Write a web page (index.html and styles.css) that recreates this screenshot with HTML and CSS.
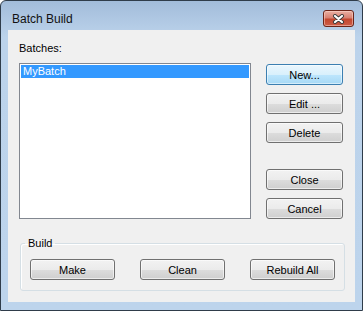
FILE: index.html
```html
<!DOCTYPE html>
<html lang="en">

<head>
    <meta charset="UTF-8">
    <title>Batch Build</title>
    <link rel="stylesheet" href="styles.css">
</head>

<body>
    <div class="window">
        <div class="titlebar">
            <span class="title">Batch Build</span>
            <button class="close-btn" aria-label="Close">
                <svg width="13" height="10" viewBox="0 0 13 10">
                    <path d="M3 2 L10 8 M10 2 L3 8" stroke="#3a3a3a" stroke-width="4" stroke-linecap="round" fill="none" />
                    <path d="M3 2 L10 8 M10 2 L3 8" stroke="#fff" stroke-width="2.2" stroke-linecap="round" fill="none" />
                </svg>
            </button>
        </div>

        <div class="client">
            <div class="main">
                <div class="batches">
                    <div class="label">Batches:</div>
                    <div class="listbox">
                        <div class="item selected">MyBatch</div>
                    </div>
                </div>
                <div class="actions">
                    <button class="btn default">New...</button>
                    <button class="btn">Edit ...</button>
                    <button class="btn">Delete</button>
                    <button class="btn spaced">Close</button>
                    <button class="btn">Cancel</button>
                </div>
            </div>

            <fieldset class="group">
                <legend>Build</legend>
                <div class="group-buttons">
                    <button class="btn wide">Make</button>
                    <button class="btn wide">Clean</button>
                    <button class="btn wide">Rebuild All</button>
                </div>
            </fieldset>
        </div>
    </div>
</body>

</html>
```

FILE: styles.css
```css
body {
    margin: 0;
    font-family: "Liberation Sans", Arial, sans-serif;
    font-size: 11px;
    color: #000;
    background: #fff;
}

.window {
    width: 363px;
    height: 311px;
    box-sizing: border-box;
    border: 1px solid #2f3c4a;
    border-radius: 6px 6px 0 0;
    background: linear-gradient(#a2bcda, #bcd3eb 36px, #bdd4ec);
    display: flex;
    flex-direction: column;
}

.titlebar {
    height: 29px;
    box-sizing: border-box;
    padding: 6px 8px 0 11px;
    display: flex;
    align-items: center;
    justify-content: space-between;
}

.title {
    font-size: 12px;
    line-height: 14px;
    color: #111;
}

.close-btn {
    width: 31px;
    height: 17px;
    padding: 0;
    border: 1px solid #6b2418;
    border-radius: 3px;
    background: linear-gradient(#eab0a3, #d88172 45%, #c3472f 55%, #cd5d48 100%);
    box-shadow: inset 0 0 0 1px rgba(255, 220, 210, 0.5);
    display: flex;
    align-items: center;
    justify-content: center;
}

.client {
    flex: 1;
    margin: 0 7px 8px;
    background: #f0f0f0;
    padding: 12px 0 0 11px;
}

.main {
    display: flex;
}

.label {
    line-height: 13px;
    margin-bottom: 8px;
}

.listbox {
    width: 232px;
    height: 156px;
    box-sizing: border-box;
    border: 1px solid #828790;
    background: #fff;
    padding: 1px;
}

.item {
    line-height: 13px;
    padding-left: 2px;
}

.item.selected {
    background: #3399ff;
    color: #fff;
}

.actions {
    margin: 22px 0 0 15px;
    display: flex;
    flex-direction: column;
    gap: 8px;
}

.btn {
    width: 77px;
    height: 21px;
    padding: 0;
    font-family: inherit;
    font-size: 11px;
    color: #000;
    border: 1px solid #707070;
    border-radius: 3px;
    background: linear-gradient(#f2f2f2, #ebebeb 50%, #dddddd 50%, #cfcfcf);
    box-shadow: inset 0 0 0 1px rgba(255, 255, 255, 0.6);
}

.btn.default {
    border-color: #3c7fb1;
    background: linear-gradient(#eaf6fd, #d9f0fc 50%, #bee6fd 50%, #a7d9f5);
    box-shadow: inset 0 0 0 1px rgba(255, 255, 255, 0.5);
}

.btn.spaced {
    margin-top: 18px;
}

.btn.wide {
    width: 85px;
}

.group {
    width: 325px;
    box-sizing: border-box;
    margin: 18px 0 0 1px;
    padding: 9px 9px 10px;
    border: 1px solid #d5dfe5;
    border-radius: 3px;
    box-shadow: inset 1px 1px 0 #fff;
    min-width: 0;
}

.group legend {
    padding: 0 3px;
    margin-left: -5px;
    line-height: 13px;
}

.group-buttons {
    display: flex;
    justify-content: space-between;
}
```
